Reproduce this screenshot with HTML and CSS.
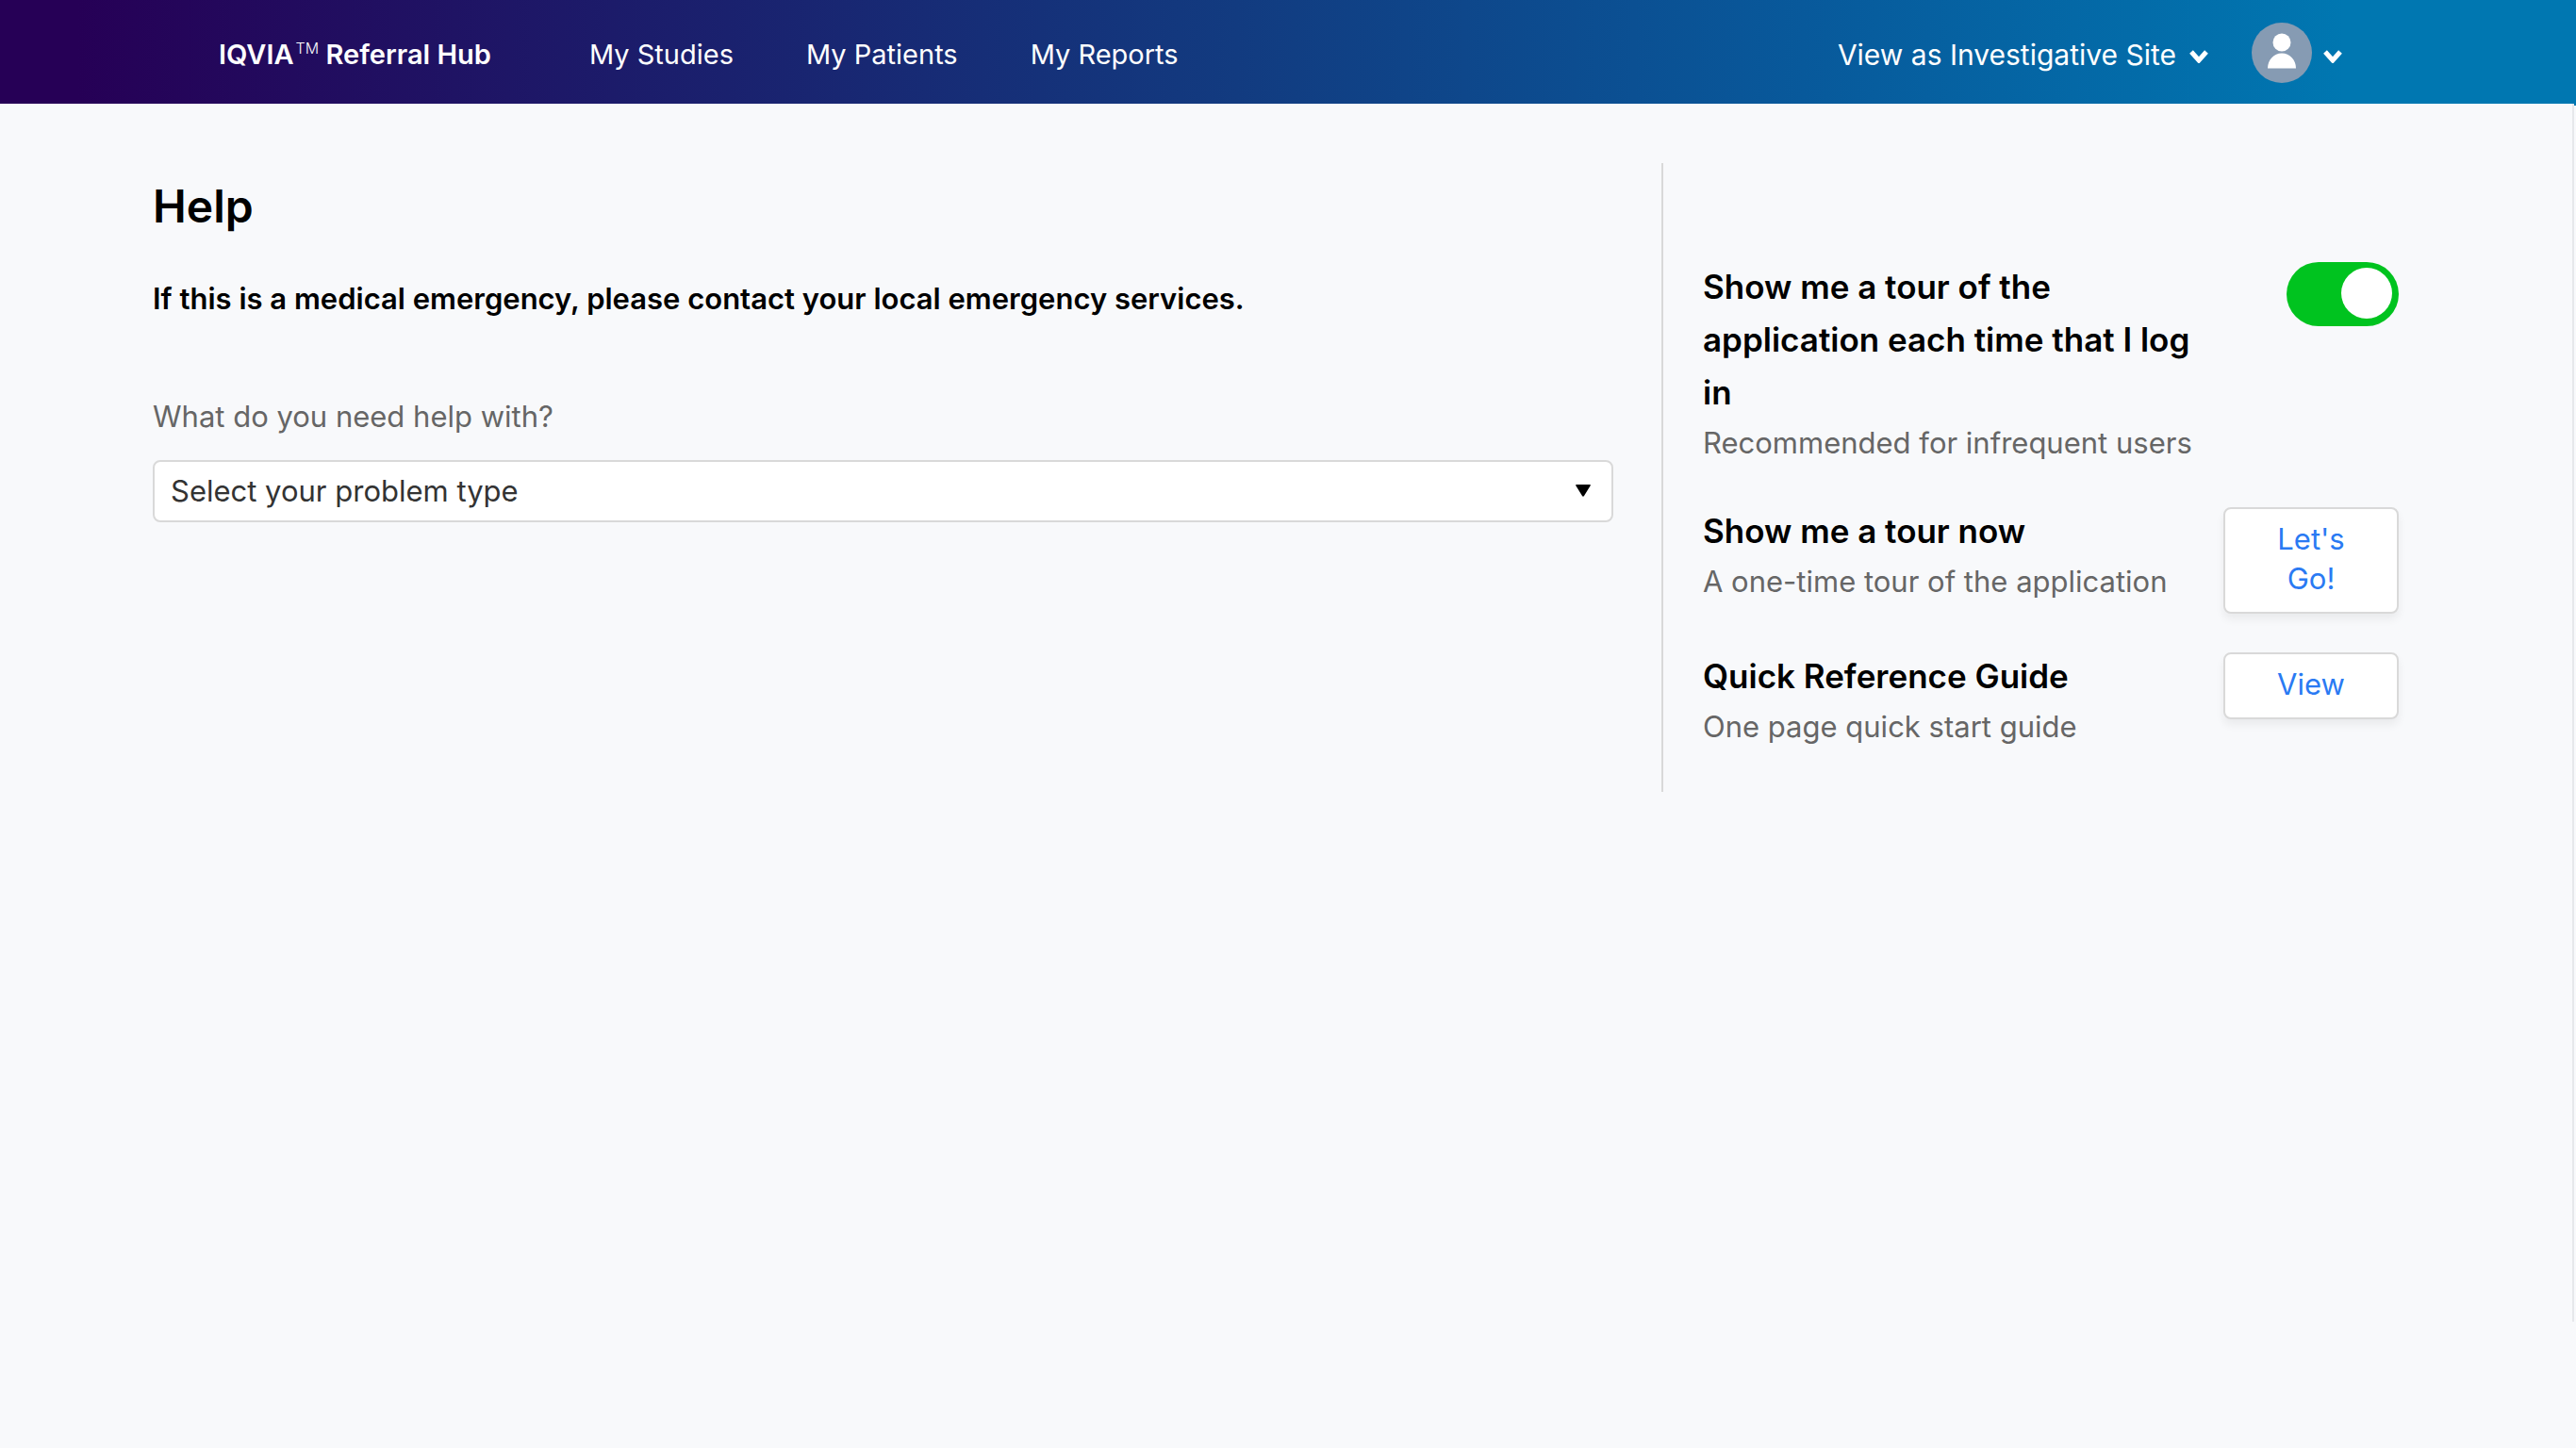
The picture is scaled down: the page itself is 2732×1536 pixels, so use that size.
FILE: index.html
```html
<!DOCTYPE html>
<html lang="en">
<head>
  <meta charset="utf-8">
  <meta name="viewport" content="width=device-width, initial-scale=1">
  <title>Help - IQVIA Referral Hub</title>
  <link rel="stylesheet" href="styles.css">
</head>
<body>
  <header class="topbar">
    <a class="brand" href="#">IQVIA<sup>TM</sup> Referral Hub</a>
    <nav class="nav" aria-label="Main">
      <a href="#">My Studies</a>
      <a href="#">My Patients</a>
      <a href="#">My Reports</a>
    </nav>
    <div class="account">
      <button class="menu-button view-as" type="button">View as Investigative Site
        <svg class="chevron" viewBox="0 0 20 14" aria-hidden="true"><path d="M2 2 10 11 18 2"/></svg>
      </button>
      <button class="menu-button user" type="button" aria-label="Account">
        <svg class="avatar" viewBox="0 0 64 64" aria-hidden="true">
          <circle cx="32" cy="32" r="32" fill="#869bb3"/>
          <circle cx="32" cy="21" r="9.5" fill="#fff"/>
          <path d="M17 48.500C17 39.500 23.500 32.500 32 32.500S47 39.500 47 48.500Z" fill="#fff"/>
        </svg>
        <svg class="chevron" viewBox="0 0 20 14" aria-hidden="true"><path d="M2 2 10 11 18 2"/></svg>
      </button>
    </div>
  </header>

  <main class="page">
    <section class="help">
      <h1>Help</h1>
      <p class="notice">If this is a medical emergency, please contact your local emergency services.</p>
      <label for="problem">What do you need help with?</label>
      <div class="select-box">
        <select id="problem">
          <option>Select your problem type</option>
        </select>
        <svg class="caret" viewBox="0 0 16 13" aria-hidden="true"><path d="M1 0H15Q16.500 0 15.500 1.500L9 12Q8 13.500 7 12L.500 1.500Q-.500 0 1 0Z"/></svg>
      </div>
    </section>

    <aside class="options">
      <div class="option option-tour">
        <div>
          <h2><label for="tour">Show me a tour of the application each time that I log in</label></h2>
          <p>Recommended for infrequent users</p>
        </div>
        <input class="switch" id="tour" type="checkbox" role="switch" checked>
      </div>
      <div class="option">
        <div>
          <h2>Show me a tour now</h2>
          <p>A one-time tour of the application</p>
        </div>
        <button class="action" type="button">Let's Go!</button>
      </div>
      <div class="option">
        <div>
          <h2>Quick Reference Guide</h2>
          <p>One page quick start guide</p>
        </div>
        <button class="action" type="button">View</button>
      </div>
    </aside>
  </main>
</body>
</html>
```
FILE: styles.css
```css
* {
  box-sizing: border-box;
}

body {
  margin: 0;
  background: #f8f9fb;
  color: #000;
  font: 400 31px/48px Inter, "Liberation Sans", sans-serif;
}

h1,
h2,
p {
  margin: 0;
}

button,
select {
  font: inherit;
}

/* Top bar */
.topbar {
  display: flex;
  align-items: center;
  height: 112px;
  padding: 4px 248px 0 232px;
  background: linear-gradient(90deg, #260056 3%, #1b1e6c 26%, #123b80 48%, #08599b 70%, #0077b1 91%);
  color: #fff;
  font-size: 29px;
}

.topbar a {
  color: inherit;
  text-decoration: none;
}

.brand {
  font-weight: 600;
}

.brand sup {
  margin-left: 2px;
  font-size: 16px;
  font-weight: 300;
  line-height: 0;
}

.nav {
  display: flex;
  gap: 77px;
  margin-left: 104px;
}

.account {
  display: flex;
  align-items: center;
  gap: 46px;
  margin-left: auto;
}

.menu-button {
  display: flex;
  align-items: center;
  padding: 0;
  border: 0;
  background: none;
  color: inherit;
}

.view-as {
  gap: 14px;
  font-size: 30px;
}

.user {
  gap: 12px;
}

.avatar {
  width: 64px;
  height: 64px;
  margin-bottom: 4px;
}

.chevron {
  width: 20px;
  height: 14px;
  margin-top: 4px;
  fill: none;
  stroke: #fff;
  stroke-width: 5;
}

/* Page */
.page {
  position: relative;
  display: grid;
  grid-template-columns: minmax(0, 1fr) 782px;
  align-items: start;
  gap: 51px;
  min-height: calc(100vh - 244px);
  margin: -2px 2px 0 0;
  padding: 63px 184px 63px 162px;
  border-right: 2px solid #e6e8eb;
  background: #f8f9fb;
}

.help {
  padding-top: 18px;
}

.help h1 {
  font-size: 48px;
  font-weight: 600;
  line-height: 56px;
}

.notice {
  margin: 46px 0 77px;
  font-weight: 600;
}

.help label {
  display: block;
  margin-bottom: 22px;
  color: #666;
}

.select-box {
  position: relative;
}

.select-box select {
  display: block;
  width: 100%;
  height: 66px;
  padding: 0 48px 0 17px;
  border: 2px solid #d9d9d9;
  border-radius: 8px;
  appearance: none;
  background: #fff;
  color: #333;
}

.caret {
  position: absolute;
  top: 26px;
  right: 24px;
  width: 16px;
  height: 13px;
  pointer-events: none;
}

/* Side options */
.options {
  display: grid;
  gap: 38px;
  padding: 103px 0 45px 42px;
  border-left: 2px solid #d9d9d9;
}

.option {
  display: grid;
  grid-template-columns: minmax(0, 1fr) 186px;
  align-items: start;
  gap: 20px;
}

.option-tour {
  padding-bottom: 3px;
}

.option h2 {
  font-size: 35px;
  font-weight: 600;
  line-height: 56px;
}

.option p {
  padding-top: 2px;
  color: #666;
}

.switch {
  display: flex;
  justify-content: flex-end;
  justify-self: end;
  width: 119px;
  height: 68px;
  margin: 2px 0 0;
  padding: 6px 7px;
  border-radius: 34px;
  appearance: none;
  background: #00c31f;
}

.switch::before {
  content: "";
  width: 54px;
  height: 54px;
  border-radius: 50%;
  background: #fff;
}

.switch:not(:checked) {
  justify-content: flex-start;
  background: #b5b5b5;
}

.action {
  margin-top: 3px;
  padding: 11px 48px 14px;
  border: 2px solid #d9d9d9;
  border-radius: 8px;
  background: #fff;
  box-shadow: 0 6px 10px rgba(0, 0, 0, 0.06);
  color: #2a7af3;
  line-height: 42px;
}
```
